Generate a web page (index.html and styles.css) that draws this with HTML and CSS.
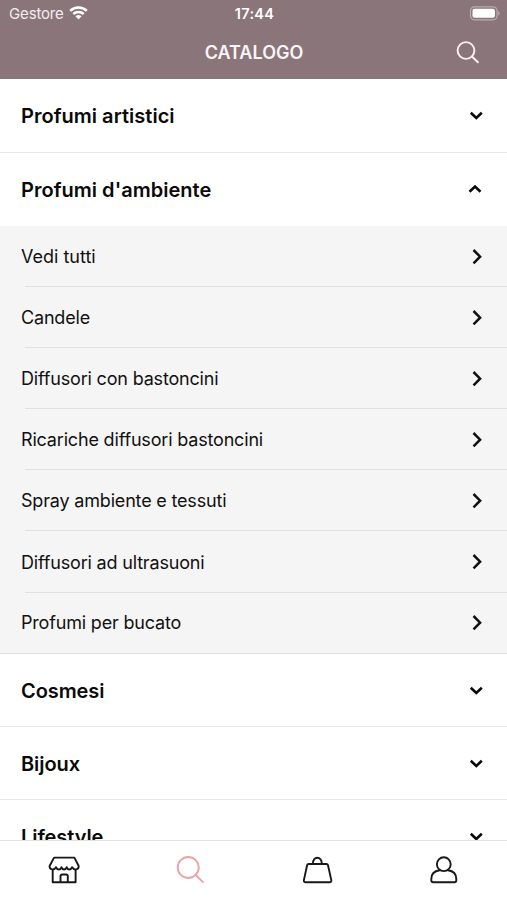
FILE: index.html
```html
<!DOCTYPE html>
<html lang="it">
<head>
<meta charset="utf-8">
<title>Catalogo</title>
<link rel="stylesheet" href="styles.css">
</head>
<body>
<svg width="0" height="0" class="defs">
  <symbol id="down" viewBox="0 0 16 12"><path d="M2.800 2.800 8.300 8l5.500-5.200"/></symbol>
  <symbol id="up" viewBox="0 0 16 12"><path d="M1.500 7.800 7 2.600l5.500 5.200"/></symbol>
  <symbol id="next" viewBox="0 0 16 18"><path d="M5.500 2 12.100 8.700l-6.600 6.700"/></symbol>
</svg>
<header class="header">
  <div class="status">
    <div class="carrier"><span>Gestore</span>
      <svg width="20" height="16" viewBox="0 0 20 16"><g fill="none" stroke="#fff" stroke-width="2.5"><path d="M1.200 5.800a12 12 0 0 1 16.600 0"/><path d="M4.300 9a7.500 7.500 0 0 1 10.400 0"/></g><path d="M6.500 11.300a4.400 4.400 0 0 1 6 0L9.500 14.500z" fill="#fff"/></svg>
    </div>
    <div class="time">17:44</div>
    <svg class="battery" width="32" height="16" viewBox="0 0 32 16"><rect x="1.500" y=".8" width="26.6" height="13" rx="4" fill="none" stroke="#b9abb0" stroke-width="1.2"/><rect x="3.500" y="2.800" width="22.400" height="9" rx="2" fill="#fff"/><path d="M29.200 5.200c2 .8 2 3.500 0 4.300z" fill="#b9abb0"/></svg>
  </div>
  <div class="nav">
    <h1>CATALOGO</h1>
    <svg class="find" width="24" height="24" viewBox="0 0 24 24"><circle cx="10" cy="9.500" r="8.4"/><path d="m16.2 15.700 5.700 5.600"/></svg>
  </div>
</header>
<main class="list">
  <section class="group first"><span>Profumi artistici</span><svg class="chev"><use href="#down"/></svg></section>
  <section class="group open"><span>Profumi d'ambiente</span><svg class="chev"><use href="#up"/></svg></section>
  <ul class="sub">
    <li><span class="wide">Vedi tutti</span><svg class="next"><use href="#next"/></svg></li>
    <li><span>Candele</span><svg class="next"><use href="#next"/></svg></li>
    <li><span>Diffusori con bastoncini</span><svg class="next"><use href="#next"/></svg></li>
    <li><span>Ricariche diffusori bastoncini</span><svg class="next"><use href="#next"/></svg></li>
    <li><span>Spray ambiente e tessuti</span><svg class="next"><use href="#next"/></svg></li>
    <li><span>Diffusori ad ultrasuoni</span><svg class="next"><use href="#next"/></svg></li>
    <li><span>Profumi per bucato</span><svg class="next"><use href="#next"/></svg></li>
  </ul>
  <section class="group tight"><span>Cosmesi</span><svg class="chev"><use href="#down"/></svg></section>
  <section class="group tight"><span>Bijoux</span><svg class="chev"><use href="#down"/></svg></section>
  <section class="group tight"><span>Lifestyle</span><svg class="chev"><use href="#down"/></svg></section>
</main>
<nav class="tabs">
  <a><svg class="shop" viewBox="0 0 32 28"><path d="M6.100 1.600h20.300l4.200 8.200c.6 3.800-4.600 5.200-6.400 1.400-1.400 3-4.500 3-5.400 0-1.300 3-4.300 3-5.400 0-1 3-4.200 3-5.400 0C6.200 15 1 13.600 1.700 9.800zM4.700 13.500v12.800h22.900V13.500M12.500 26.300v-6q0-1.800 1.800-1.800h3.700q1.800 0 1.800 1.800v6"/></svg></a>
  <a class="active"><svg viewBox="0 0 32 28"><circle cx="14.200" cy="11.500" r="10.500"/><path d="m21.700 19 7.200 7.200"/></svg></a>
  <a><svg viewBox="0 0 32 28"><path d="M7.700 8h17.700q1.300 0 1.600 1.300l3.300 14.800q.4 2.200-1.800 2.200H4.700q-2.200 0-1.800-2.200L6.100 9.300Q6.400 8 7.700 8zM11.900 8C11.300-.300 21.300-.300 20.800 8"/></svg></a>
  <a><svg viewBox="0 0 32 28"><circle cx="15.800" cy="8.200" r="6.900"/><path d="M11.600 14.300C5.300 15.200 3.300 18 3.300 23v1.300q0 2 2 2h21q2 0 2-2V23c0-5-2-7.800-8.300-8.700"/></svg></a>
</nav>
</body>
</html>
```
FILE: styles.css
```css
* { box-sizing: border-box; }
body {
  margin: 0;
  width: 507px;
  height: 900px;
  overflow: hidden;
  display: flex;
  flex-direction: column;
  background: #fff;
  color: #111;
  font-family: Inter, "Liberation Sans", sans-serif;
}
.defs { position: absolute; }
.header { height: 79px; flex: none; background: #8a757b; color: #fff; }
.status {
  height: 27px;
  display: grid;
  grid-template-columns: 1fr auto 1fr;
  align-items: center;
  padding: 0 7px 0 9px;
  font-size: 15px;
}
.carrier { display: flex; align-items: center; gap: 5px; color: #f3edef; letter-spacing: -.15px; }
.carrier svg { margin-top: -2px; }
.time { font-weight: 600; font-size: 14.500px; letter-spacing: .3px; }
.battery { justify-self: end; margin-right: -1px; }
.nav {
  height: 52px;
  display: grid;
  grid-template-columns: 1fr auto 1fr;
  align-items: center;
  padding-right: 27px;
  padding-left: 28px;
}
.nav h1 { grid-column: 2; margin: 0; font-size: 18px; line-height: 52px; font-weight: 600; letter-spacing: 0; color: #fbf4f6; }
.find { justify-self: end; fill: none; stroke: #fbf2f5; stroke-width: 1.900; stroke-linecap: round; }
.list { flex: 1; min-height: 0; overflow: hidden; }
.group {
  height: 73.300px;
  display: flex;
  align-items: center;
  justify-content: space-between;
  padding: 1px 23px 0 21px;
  border-bottom: 1px solid #e9e9e9;
  font-size: 20px;
  font-weight: 600;
  letter-spacing: .03px;
  color: #0a0a0a;
}
.group.first { height: 74px; }
.group.open { height: 73px; border-bottom-color: transparent; }
.group.tight { letter-spacing: -.08px; }
.chev { width: 16px; height: 12px; fill: none; stroke: #0a0a0a; stroke-width: 2.600; }
.sub { list-style: none; margin: 0; padding: 0; background: #f5f5f5; border-bottom: 1px solid #dedede; }
.sub li {
  height: 61.100px;
  display: flex;
  align-items: center;
  justify-content: space-between;
  padding: 0 23px 0 21px;
  font-size: 18px;
  letter-spacing: -.18px;
  background: linear-gradient(#e0e0e0, #e0e0e0) 25px 100% / 100% 1px no-repeat;
}
.sub .wide { letter-spacing: 0; }
.sub li:last-child { background: none; height: 60.300px; }
.next { width: 16px; height: 18px; fill: none; stroke: #111; stroke-width: 2.500; }
.tabs {
  flex: none;
  height: 60px;
  border-top: 1px solid #e2e2e2;
  display: grid;
  grid-template-columns: repeat(4, 1fr);
  padding-top: 15px;
  background: #fff;
}
.tabs a { display: flex; justify-content: center; color: #181818; }
.tabs svg { width: 32px; height: 28px; fill: none; stroke: currentColor; stroke-width: 1.900; stroke-linejoin: round; stroke-linecap: round; }
.tabs .shop { margin-left: 2px; }
.tabs .active { color: #eca3a5; }
```
